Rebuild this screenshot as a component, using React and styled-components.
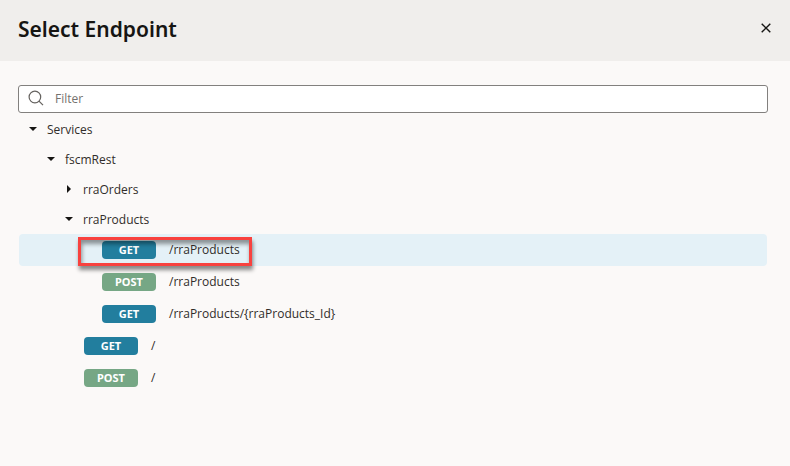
import React, { useState } from "react";
import styled, { createGlobalStyle } from "styled-components";

const GlobalStyle = createGlobalStyle`
  *, *::before, *::after { box-sizing: border-box; }
  body {
    margin: 0;
    background: #fbf9f8;
    color: #161513;
    font-family: "Open Sans", "Noto Sans", sans-serif;
    font-size: 12px;
  }
`;

const Dialog = styled.section`
  min-height: 100vh;
  background: #fbf9f8;
`;

const Header = styled.header`
  display: flex;
  align-items: center;
  justify-content: space-between;
  height: 61px;
  padding: 0 16px 4px 18px;
  background: #f0eeec;
`;

const Title = styled.h1`
  margin: 0;
  font-family: "Noto Sans", "Open Sans", sans-serif;
  font-size: 21px;
  line-height: 28px;
  font-weight: 600;
`;

const CloseButton = styled.button`
  display: flex;
  padding: 1px 2px 3px;
  border: 0;
  background: none;
  color: #161513;
  cursor: pointer;
`;

const Body = styled.main`
  padding: 24px 22px 24px 18px;
`;

const SearchField = styled.label`
  display: flex;
  align-items: center;
  gap: 10px;
  height: 28px;
  padding: 0 9px 2px;
  border: 1px solid #82807e;
  border-radius: 3px;
  background: #fff;
  color: #65625f;
`;

const SearchInput = styled.input`
  flex: 1;
  min-width: 0;
  padding: 0;
  border: 0;
  outline: 0;
  background: none;
  color: #161513;
  font: inherit;
  &::placeholder { color: #75716e; opacity: 1; }
`;

const Tree = styled.ul`
  margin: 1px 1px 0;
  padding: 0;
  list-style: none;
`;

const FolderRow = styled.li`
  display: flex;
  align-items: center;
  height: 30px;
  padding-top: 2px;
  padding-left: ${({ $level }) => 9 + $level * 18}px;
`;

const FolderButton = styled.button`
  display: flex;
  align-items: center;
  gap: 9px;
  padding: 0;
  border: 0;
  background: none;
  color: #312d2a;
  font: inherit;
  line-height: 18px;
  cursor: pointer;
`;

const EndpointRow = styled.li`
  display: flex;
  align-items: center;
  height: 32px;
  padding-left: ${({ $level }) => 29 + $level * 18}px;
  border-radius: 4px;
  background: ${({ $selected }) => ($selected ? "#e4f1f7" : "transparent")};
`;

const EndpointButton = styled.button`
  position: relative;
  display: flex;
  align-items: center;
  gap: 13px;
  padding: 0;
  border: 0;
  background: none;
  color: #312d2a;
  font: inherit;
  line-height: 18px;
  cursor: pointer;
`;

const Method = styled.span`
  width: 54px;
  height: 18px;
  border-radius: 4px;
  background: ${({ $method }) => ($method === "GET" ? "#227e9e" : "#76a785")};
  color: #fff;
  font-family: "Noto Sans", "Open Sans", sans-serif;
  font-size: 11px;
  line-height: 18px;
  font-weight: 700;
  text-align: center;
`;

const Highlight = styled.span`
  position: absolute;
  inset: -4px -12px -7px -24px;
  border: 3px solid #f8423f;
  box-shadow: 1px 4px 4px rgba(0, 0, 0, 0.45), inset 1px 4px 4px rgba(0, 0, 0, 0.4);
  pointer-events: none;
`;

const folders = [
  { name: "Services", level: 0, open: true },
  { name: "fscmRest", level: 1, open: true },
  { name: "rraOrders", level: 2, open: false },
  { name: "rraProducts", level: 2, open: true },
];

const endpoints = [
  { method: "GET", path: "/rraProducts", level: 3, marked: true },
  { method: "POST", path: "/rraProducts", level: 3 },
  { method: "GET", path: "/rraProducts/{rraProducts_Id}", level: 3 },
  { method: "GET", path: "/", level: 2 },
  { method: "POST", path: "/", level: 2 },
];

function Caret({ open }) {
  return (
    <svg width="10" height="10" viewBox="0 0 10 10" fill="#161513" aria-hidden="true">
      <path d={open ? "M1 2H9L5 6Z" : "M3 0V8L7 4Z"} />
    </svg>
  );
}

export default function App() {
  const [filter, setFilter] = useState("");
  const [selected, setSelected] = useState(0);

  return (
    <>
      <GlobalStyle />
      <Dialog aria-labelledby="dialog-title">
        <Header>
          <Title id="dialog-title">Select Endpoint</Title>
          <CloseButton type="button" aria-label="Close">
            <svg width="12" height="12" viewBox="0 0 12 12" fill="none" stroke="currentColor" strokeWidth="1.4">
              <path d="M1.7 1.7L10.3 10.3M10.3 1.7L1.7 10.3" />
            </svg>
          </CloseButton>
        </Header>
        <Body>
          <SearchField>
            <svg width="17" height="17" viewBox="0 0 17 17" fill="none" stroke="currentColor" strokeWidth="1.2" aria-hidden="true">
              <circle cx="6.9" cy="7" r="5.8" />
              <path d="M11 11.1L15 15.1" />
            </svg>
            <SearchInput
              type="text"
              aria-label="Filter"
              placeholder="Filter"
              value={filter}
              onChange={(event) => setFilter(event.target.value)}
            />
          </SearchField>
          <Tree>
            {folders.map((folder) => (
              <FolderRow key={folder.name} $level={folder.level}>
                <FolderButton type="button" aria-expanded={folder.open}>
                  <Caret open={folder.open} />
                  {folder.name}
                </FolderButton>
              </FolderRow>
            ))}
            {endpoints.map((endpoint, index) => (
              <EndpointRow key={index} $level={endpoint.level} $selected={index === selected}>
                <EndpointButton type="button" onClick={() => setSelected(index)}>
                  <Method $method={endpoint.method}>{endpoint.method}</Method>
                  {endpoint.path}
                  {endpoint.marked && <Highlight />}
                </EndpointButton>
              </EndpointRow>
            ))}
          </Tree>
        </Body>
      </Dialog>
    </>
  );
}
